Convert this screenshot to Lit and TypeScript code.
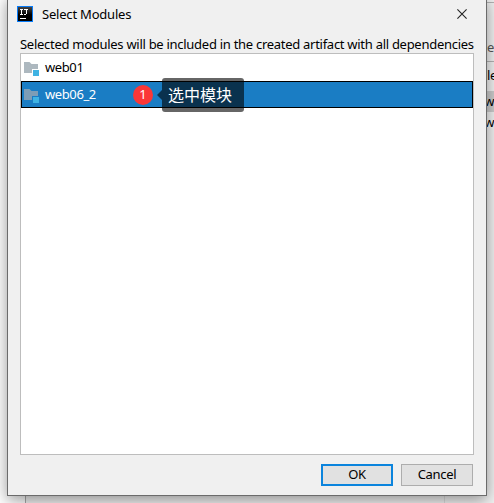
import { LitElement, html, css } from "lit";
import { customElement } from "lit/decorators.js";

const base = css`
  * { box-sizing: border-box; }
  svg { display: block; flex: none; }
`;

@customElement("module-row")
class ModuleRow extends LitElement {
  static properties = { name: {}, selected: { type: Boolean, reflect: true } };
  declare name: string;
  declare selected: boolean;
  static styles = [base, css`
    :host { box-sizing: border-box; display: flex; position: relative; align-items: center; height: 27px; padding: 0 3px; color: #000; }
    :host([selected]) { background: #1a7dc4; border: 1px solid #000; padding: 0 2px; color: #fff; }
    svg { margin-right: 5px; }
    .name { line-height: 18px; padding-bottom: 2px; letter-spacing: -.4px; }
  `];
  render() {
    return html`<svg width="16" height="16" viewBox="0 0 16 16" shape-rendering="crispEdges">
        <path fill=${this.selected ? "#7d9db6" : "#adb8bf"} shape-rendering="auto" d="M0 2h5.5l2 2H14v5H8v4H0z"/>
        <rect x="9" y="10" width="6" height="6" fill="#3fb3e3"/>
      </svg><span class="name">${this.name}</span><slot></slot>`;
  }
}

@customElement("app-root")
class AppRoot extends LitElement {
  static styles = [base, css`
    :host { display: block; position: relative; width: 494px; height: 503px; overflow: hidden; font: 13px/18px "Noto Sans", "Noto Sans CJK SC", sans-serif; color: #000; background: #f2f2f2; }
    .behind { display: flex; height: 503px; }
    .left { width: 26px; background: #fff; border-right: 1px solid #aaa; }
    .mid { width: 419px; border-right: 1px solid #ddd; }
    .right { flex: 1; display: flex; flex-direction: column; align-items: stretch; padding-top: 2px; text-align: right; letter-spacing: -.4px; }
    .right span { white-space: nowrap; height: 20px; line-height: 20px; flex: none; }
    .right .line { height: 1px; background: #b4b4b4; }
    .right .tab { height: 35px; color: #555; margin-top: 23px; padding-top: 11px; }
    .right .head { height: 29px; line-height: 27px; margin-right: -3px; }
    .right .on { background: #cdcdcd; height: 21px; line-height: 20px; }
    .dialog { position: absolute; left: 7px; top: -4px; width: 480px; height: 500px; padding-top: 4px; display: flex; flex-direction: column; background: #f0f0f0; border: 1px solid #6b6b6b; border-top: 0; box-shadow: 0 4px 15px rgba(0,0,0,.42); }
    .title { display: flex; align-items: center; height: 28px; padding: 0 19px 0 9px; }
    .title .text { flex: 1; margin-left: 9px; letter-spacing: -.2px; }
    .hint { height: 25px; padding: 7px 0 0 12px; white-space: nowrap; letter-spacing: -.28px; }
    .list { width: 454px; height: 402px; margin-left: 12px; background: #fff; border: 1px solid #bdbdbd; }
    .marker { position: absolute; left: 111px; top: 3px; width: 20px; height: 20px; border-radius: 50%; background: #fb3737; color: #fff; font-size: 13px; line-height: 19px; text-align: center; }
    .callout { position: absolute; left: 140px; top: -4px; width: 82px; height: 34px; padding-left: 6px; border-radius: 3px; background: rgba(0,0,0,.6); color: #fff; font: 16px/33px "Noto Sans CJK SC", sans-serif; white-space: nowrap; }
    .callout::before { content: ""; position: absolute; left: -5px; top: 12px; border: 5px solid transparent; border-left: 0; border-right-color: rgba(0,0,0,.6); }
    .buttons { display: flex; justify-content: flex-end; gap: 8px; padding: 9px 13px 0 0; }
    .button { width: 72px; height: 22px; border: 1px solid #adadad; background: #e1e1e1; font: inherit; letter-spacing: -.3px; line-height: 18px; text-align: center; padding: 0 0 2px; color: #000; }
    .primary { border: 2px solid #0b84dd; line-height: 16px; }
  `];
  render() {
    return html`
      <div class="behind">
        <div class="left"></div><div class="mid"></div>
        <div class="right">
          <span class="line"></span><span class="tab">e</span><span class="line"></span>
          <span class="head">le</span><span class="on">w</span><span>w</span>
        </div>
      </div>
      <div class="dialog">
        <div class="title">
          <svg width="16" height="16" viewBox="0 0 16 16" shape-rendering="crispEdges">
            <defs><linearGradient id="g" x2="0" y2="1"><stop stop-color="#454545"/><stop offset=".55" stop-color="#000"/></linearGradient></defs>
            <rect width="16" height="16" fill="#087cfa"/><rect x="1" y="1" width="14" height="14" fill="url(#g)"/>
            <path fill="none" stroke="#fff" d="M3 3.5h3M4.5 3v5M3 8.5h3M7 3.5h4M9.5 3v5M7 8.5h2"/>
            <rect x="3" y="12" width="6" height="1" fill="#fff"/>
          </svg>
          <span class="text">Select Modules</span>
          <svg width="10" height="10" viewBox="0 0 10 10"><path d="M.4.4l9.2 9.2M9.6.4L.4 9.6" stroke="#222" stroke-width="1.1"/></svg>
        </div>
        <div class="hint">Selected modules will be included in the created artifact with all dependencies</div>
        <div class="list">
          <module-row name="web01"></module-row>
          <module-row name="web06_2" selected>
            <span class="marker">1</span><span class="callout">选中模块</span>
          </module-row>
        </div>
        <div class="buttons">
          <button class="button primary">OK</button>
          <button class="button">Cancel</button>
        </div>
      </div>`;
  }
}
